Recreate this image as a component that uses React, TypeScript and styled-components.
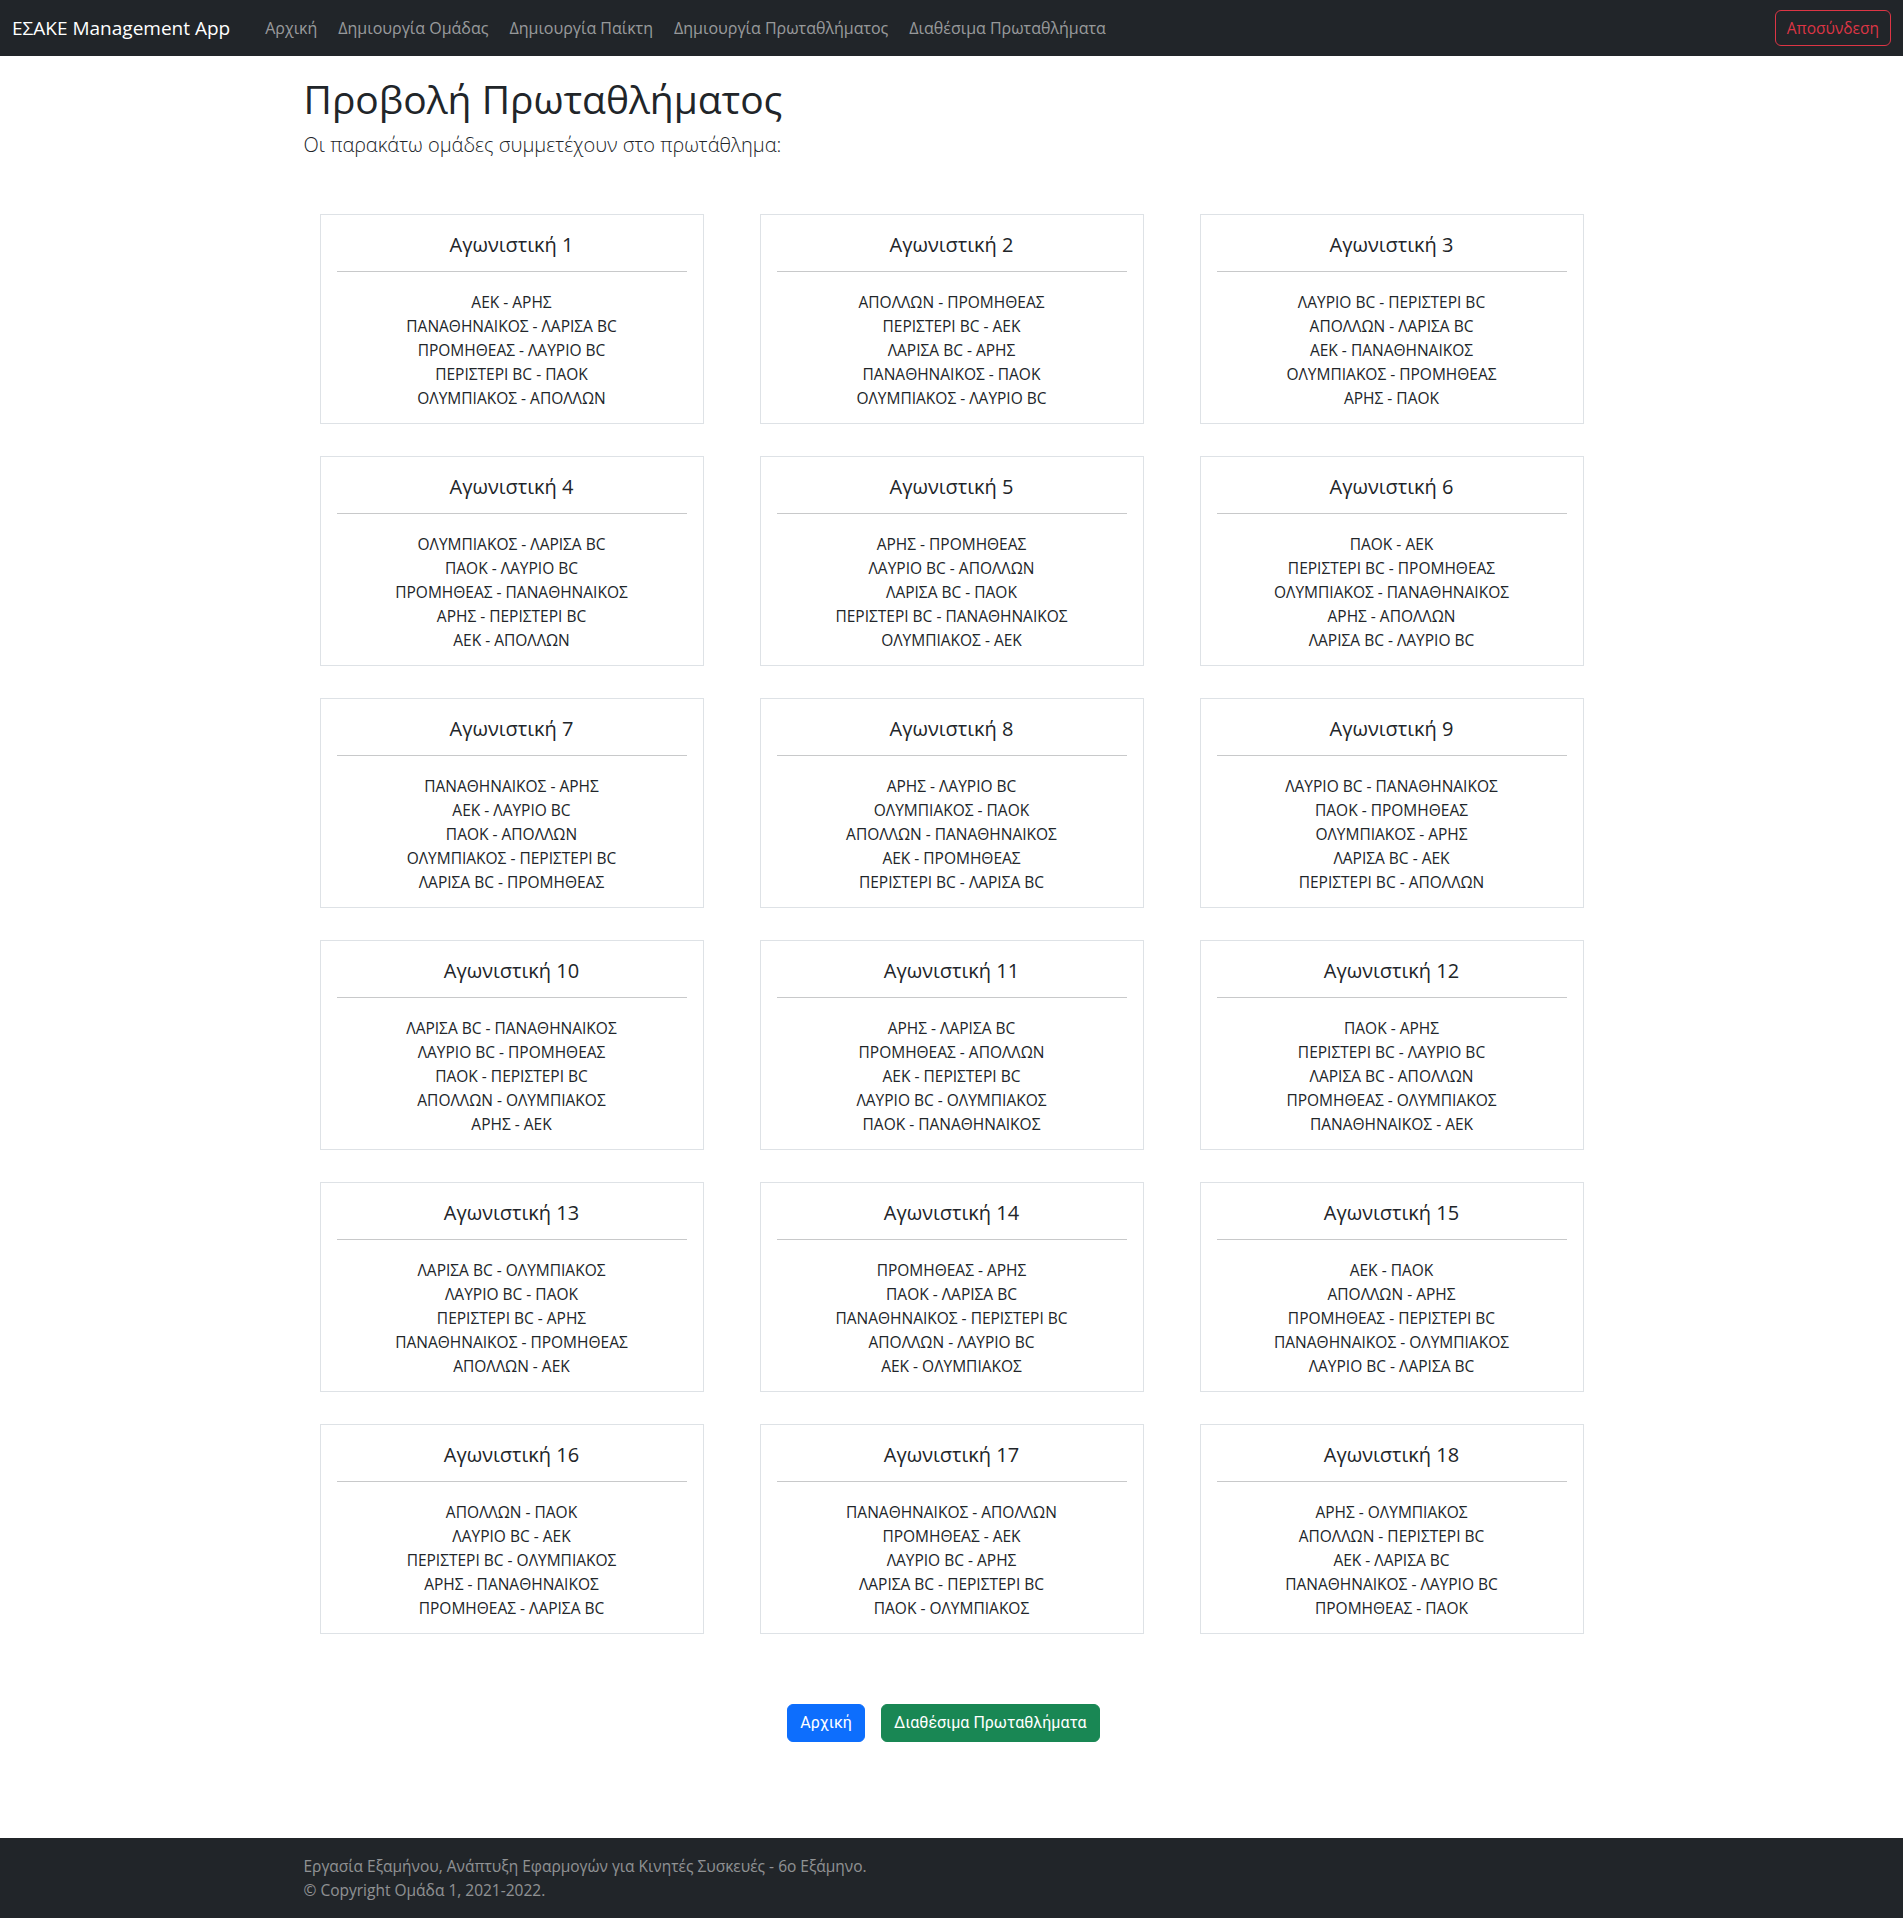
import React from 'react';
import styled, {createGlobalStyle} from 'styled-components';

const rounds: string[][] = [
    ['ΑΕΚ - ΑΡΗΣ', 'ΠΑΝΑΘΗΝΑΙΚΟΣ - ΛΑΡΙΣΑ BC', 'ΠΡΟΜΗΘΕΑΣ - ΛΑΥΡΙΟ BC', 'ΠΕΡΙΣΤΕΡΙ BC - ΠΑΟΚ', 'ΟΛΥΜΠΙΑΚΟΣ - ΑΠΟΛΛΩΝ'],
    ['ΑΠΟΛΛΩΝ - ΠΡΟΜΗΘΕΑΣ', 'ΠΕΡΙΣΤΕΡΙ BC - ΑΕΚ', 'ΛΑΡΙΣΑ BC - ΑΡΗΣ', 'ΠΑΝΑΘΗΝΑΙΚΟΣ - ΠΑΟΚ', 'ΟΛΥΜΠΙΑΚΟΣ - ΛΑΥΡΙΟ BC'],
    ['ΛΑΥΡΙΟ BC - ΠΕΡΙΣΤΕΡΙ BC', 'ΑΠΟΛΛΩΝ - ΛΑΡΙΣΑ BC', 'ΑΕΚ - ΠΑΝΑΘΗΝΑΙΚΟΣ', 'ΟΛΥΜΠΙΑΚΟΣ - ΠΡΟΜΗΘΕΑΣ', 'ΑΡΗΣ - ΠΑΟΚ'],
    ['ΟΛΥΜΠΙΑΚΟΣ - ΛΑΡΙΣΑ BC', 'ΠΑΟΚ - ΛΑΥΡΙΟ BC', 'ΠΡΟΜΗΘΕΑΣ - ΠΑΝΑΘΗΝΑΙΚΟΣ', 'ΑΡΗΣ - ΠΕΡΙΣΤΕΡΙ BC', 'ΑΕΚ - ΑΠΟΛΛΩΝ'],
    ['ΑΡΗΣ - ΠΡΟΜΗΘΕΑΣ', 'ΛΑΥΡΙΟ BC - ΑΠΟΛΛΩΝ', 'ΛΑΡΙΣΑ BC - ΠΑΟΚ', 'ΠΕΡΙΣΤΕΡΙ BC - ΠΑΝΑΘΗΝΑΙΚΟΣ', 'ΟΛΥΜΠΙΑΚΟΣ - ΑΕΚ'],
    ['ΠΑΟΚ - ΑΕΚ', 'ΠΕΡΙΣΤΕΡΙ BC - ΠΡΟΜΗΘΕΑΣ', 'ΟΛΥΜΠΙΑΚΟΣ - ΠΑΝΑΘΗΝΑΙΚΟΣ', 'ΑΡΗΣ - ΑΠΟΛΛΩΝ', 'ΛΑΡΙΣΑ BC - ΛΑΥΡΙΟ BC'],
    ['ΠΑΝΑΘΗΝΑΙΚΟΣ - ΑΡΗΣ', 'ΑΕΚ - ΛΑΥΡΙΟ BC', 'ΠΑΟΚ - ΑΠΟΛΛΩΝ', 'ΟΛΥΜΠΙΑΚΟΣ - ΠΕΡΙΣΤΕΡΙ BC', 'ΛΑΡΙΣΑ BC - ΠΡΟΜΗΘΕΑΣ'],
    ['ΑΡΗΣ - ΛΑΥΡΙΟ BC', 'ΟΛΥΜΠΙΑΚΟΣ - ΠΑΟΚ', 'ΑΠΟΛΛΩΝ - ΠΑΝΑΘΗΝΑΙΚΟΣ', 'ΑΕΚ - ΠΡΟΜΗΘΕΑΣ', 'ΠΕΡΙΣΤΕΡΙ BC - ΛΑΡΙΣΑ BC'],
    ['ΛΑΥΡΙΟ BC - ΠΑΝΑΘΗΝΑΙΚΟΣ', 'ΠΑΟΚ - ΠΡΟΜΗΘΕΑΣ', 'ΟΛΥΜΠΙΑΚΟΣ - ΑΡΗΣ', 'ΛΑΡΙΣΑ BC - ΑΕΚ', 'ΠΕΡΙΣΤΕΡΙ BC - ΑΠΟΛΛΩΝ'],
    ['ΛΑΡΙΣΑ BC - ΠΑΝΑΘΗΝΑΙΚΟΣ', 'ΛΑΥΡΙΟ BC - ΠΡΟΜΗΘΕΑΣ', 'ΠΑΟΚ - ΠΕΡΙΣΤΕΡΙ BC', 'ΑΠΟΛΛΩΝ - ΟΛΥΜΠΙΑΚΟΣ', 'ΑΡΗΣ - ΑΕΚ'],
    ['ΑΡΗΣ - ΛΑΡΙΣΑ BC', 'ΠΡΟΜΗΘΕΑΣ - ΑΠΟΛΛΩΝ', 'ΑΕΚ - ΠΕΡΙΣΤΕΡΙ BC', 'ΛΑΥΡΙΟ BC - ΟΛΥΜΠΙΑΚΟΣ', 'ΠΑΟΚ - ΠΑΝΑΘΗΝΑΙΚΟΣ'],
    ['ΠΑΟΚ - ΑΡΗΣ', 'ΠΕΡΙΣΤΕΡΙ BC - ΛΑΥΡΙΟ BC', 'ΛΑΡΙΣΑ BC - ΑΠΟΛΛΩΝ', 'ΠΡΟΜΗΘΕΑΣ - ΟΛΥΜΠΙΑΚΟΣ', 'ΠΑΝΑΘΗΝΑΙΚΟΣ - ΑΕΚ'],
    ['ΛΑΡΙΣΑ BC - ΟΛΥΜΠΙΑΚΟΣ', 'ΛΑΥΡΙΟ BC - ΠΑΟΚ', 'ΠΕΡΙΣΤΕΡΙ BC - ΑΡΗΣ', 'ΠΑΝΑΘΗΝΑΙΚΟΣ - ΠΡΟΜΗΘΕΑΣ', 'ΑΠΟΛΛΩΝ - ΑΕΚ'],
    ['ΠΡΟΜΗΘΕΑΣ - ΑΡΗΣ', 'ΠΑΟΚ - ΛΑΡΙΣΑ BC', 'ΠΑΝΑΘΗΝΑΙΚΟΣ - ΠΕΡΙΣΤΕΡΙ BC', 'ΑΠΟΛΛΩΝ - ΛΑΥΡΙΟ BC', 'ΑΕΚ - ΟΛΥΜΠΙΑΚΟΣ'],
    ['ΑΕΚ - ΠΑΟΚ', 'ΑΠΟΛΛΩΝ - ΑΡΗΣ', 'ΠΡΟΜΗΘΕΑΣ - ΠΕΡΙΣΤΕΡΙ BC', 'ΠΑΝΑΘΗΝΑΙΚΟΣ - ΟΛΥΜΠΙΑΚΟΣ', 'ΛΑΥΡΙΟ BC - ΛΑΡΙΣΑ BC'],
    ['ΑΠΟΛΛΩΝ - ΠΑΟΚ', 'ΛΑΥΡΙΟ BC - ΑΕΚ', 'ΠΕΡΙΣΤΕΡΙ BC - ΟΛΥΜΠΙΑΚΟΣ', 'ΑΡΗΣ - ΠΑΝΑΘΗΝΑΙΚΟΣ', 'ΠΡΟΜΗΘΕΑΣ - ΛΑΡΙΣΑ BC'],
    ['ΠΑΝΑΘΗΝΑΙΚΟΣ - ΑΠΟΛΛΩΝ', 'ΠΡΟΜΗΘΕΑΣ - ΑΕΚ', 'ΛΑΥΡΙΟ BC - ΑΡΗΣ', 'ΛΑΡΙΣΑ BC - ΠΕΡΙΣΤΕΡΙ BC', 'ΠΑΟΚ - ΟΛΥΜΠΙΑΚΟΣ'],
    ['ΑΡΗΣ - ΟΛΥΜΠΙΑΚΟΣ', 'ΑΠΟΛΛΩΝ - ΠΕΡΙΣΤΕΡΙ BC', 'ΑΕΚ - ΛΑΡΙΣΑ BC', 'ΠΑΝΑΘΗΝΑΙΚΟΣ - ΛΑΥΡΙΟ BC', 'ΠΡΟΜΗΘΕΑΣ - ΠΑΟΚ'],
];

const navLinks = ['Αρχική', 'Δημιουργία Ομάδας', 'Δημιουργία Παίκτη', 'Δημιουργία Πρωταθλήματος', 'Διαθέσιμα Πρωταθλήματα'];

export default function App() {
    return (
        <>
            <GlobalStyle />
            <Page>
                <Navbar>
                    <NavLeft>
                        <Brand href='#'>ΕΣΑΚΕ Management App</Brand>
                        <NavList>
                            {navLinks.map((link) => (
                                <NavLink key={link} href='#'>
                                    {link}
                                </NavLink>
                            ))}
                        </NavList>
                    </NavLeft>
                    <LogoutButton>Αποσύνδεση</LogoutButton>
                </Navbar>

                <Main>
                    <Title>Προβολή Πρωταθλήματος</Title>
                    <Lead>Οι παρακάτω ομάδες συμμετέχουν στο πρωτάθλημα:</Lead>

                    <Grid>
                        {rounds.map((games, i) => (
                            <Card key={i}>
                                <CardTitle>Αγωνιστική {i + 1}</CardTitle>
                                <Divider />
                                <GameList>
                                    {games.map((game) => (
                                        <Game key={game}>{game}</Game>
                                    ))}
                                </GameList>
                            </Card>
                        ))}
                    </Grid>

                    <Actions>
                        <ActionButton variant='primary'>Αρχική</ActionButton>
                        <ActionButton variant='success'>Διαθέσιμα Πρωταθλήματα</ActionButton>
                    </Actions>
                </Main>

                <Footer>
                    <FooterInner>
                        <FooterLine>Εργασία Εξαμήνου, Ανάπτυξη Εφαρμογών για Κινητές Συσκευές - 6ο Εξάμηνο.</FooterLine>
                        <FooterLine>© Copyright Ομάδα 1, 2021-2022.</FooterLine>
                    </FooterInner>
                </Footer>
            </Page>
        </>
    );
}

const GlobalStyle = createGlobalStyle`
    * {
        box-sizing: border-box;
    }

    body {
        margin: 0;
        font-family: 'Open Sans', 'Noto Sans', sans-serif;
        font-size: 16px;
        line-height: 1.5;
        color: #212529;
        background: #fff;
    }
`;

const Page = styled.div`
    min-height: 100vh;
    display: flex;
    flex-direction: column;
`;

const Navbar = styled.nav`
    height: 56px;
    background-color: #212529;
    display: flex;
    align-items: center;
    justify-content: space-between;
    padding: 0 12px;
`;

const NavLeft = styled.div`
    display: flex;
    align-items: center;
`;

const Brand = styled.a`
    color: #fff;
    font-size: 19px;
    line-height: 30px;
    text-decoration: none;
    margin-right: 35px;
`;

const NavList = styled.div`
    display: flex;
    gap: 21px;
`;

const NavLink = styled.a`
    color: rgba(255, 255, 255, 0.55);
    font-size: 16px;
    text-decoration: none;
`;

const LogoutButton = styled.button`
    font-family: 'Open Sans', sans-serif;
    font-size: 15.5px;
    line-height: 24px;
    padding: 5px 11px;
    color: #dc3545;
    background: transparent;
    border: 1px solid #dc3545;
    border-radius: 6px;
`;

const Main = styled.main`
    width: 1320px;
    margin: 0 auto;
    padding: 19px 12px 0;
    flex: 1;
`;

const Title = styled.h1`
    margin: 0 0 8px;
    font-size: 39px;
    font-weight: 400;
    line-height: 47px;
`;

const Lead = styled.p`
    margin: 0 0 16px;
    font-size: 20px;
    font-weight: 300;
    line-height: 30px;
`;

const Grid = styled.div`
    display: grid;
    grid-template-columns: repeat(3, 384px);
    column-gap: 56px;
    row-gap: 32px;
    padding: 16px;
    margin-top: 38px;
`;

const Card = styled.div`
    border: 1px solid #dee2e6;
    padding: 16px 16px 13px;
    text-align: center;
`;

const CardTitle = styled.h5`
    margin: 2px 0 0;
    font-size: 20px;
    font-weight: 400;
    line-height: 24px;
`;

const Divider = styled.hr`
    margin: 14px 0 18px;
    border: 0;
    border-top: 1px solid #c8c9ca;
`;

const GameList = styled.div`
    display: flex;
    flex-direction: column;
`;

const Game = styled.div`
    font-size: 15.5px;
    line-height: 24px;
`;

const Actions = styled.div`
    display: flex;
    justify-content: center;
    margin: 54px 0 48px;
`;

const ActionButton = styled.button<{variant: 'primary' | 'success'}>`
    font-family: Roboto, 'Liberation Sans', sans-serif;
    font-size: 16px;
    line-height: 24px;
    padding: 6px 12px;
    margin-right: 16px;
    color: #fff;
    border: 1px solid ${({variant}) => (variant === 'primary' ? '#0d6efd' : '#198754')};
    background-color: ${({variant}) => (variant === 'primary' ? '#0d6efd' : '#198754')};
    border-radius: 6px;
`;

const Footer = styled.footer`
    background-color: #212529;
    margin-top: 48px;
    padding: 16px 0;
`;

const FooterInner = styled.div`
    width: 1320px;
    margin: 0 auto;
    padding: 0 12px;
`;

const FooterLine = styled.div`
    color: rgba(255, 255, 255, 0.5);
    font-size: 15.5px;
    line-height: 24px;
`;
